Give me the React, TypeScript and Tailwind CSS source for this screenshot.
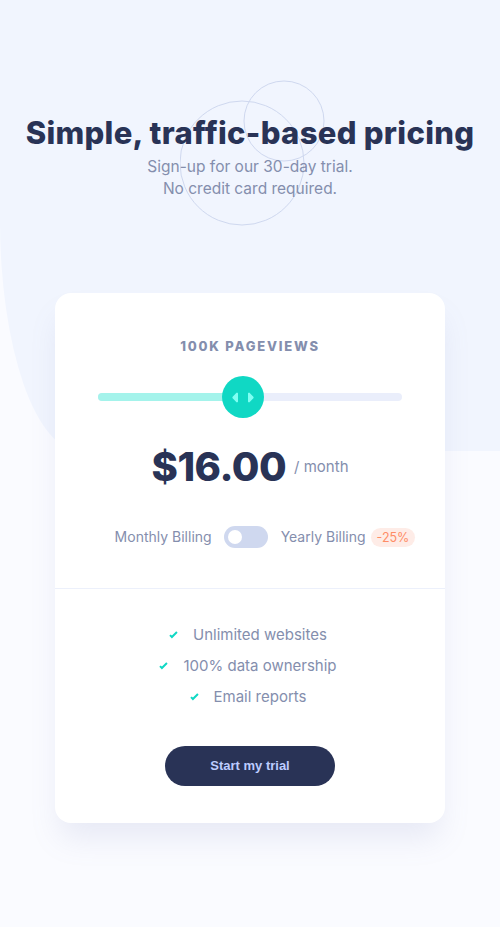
import React from 'react'

function Check() {
  return (
    <svg width="9" height="8" viewBox="0 0 9 8" className="shrink-0">
      <path fill="none" stroke="#10D8C4" strokeWidth="2" d="M1 4.134l1.907 1.908L7.949 1" />
    </svg>
  )
}

function ThumbIcon() {
  return (
    <svg width="22" height="13" viewBox="0 0 22 13">
      <g fill="#80FFF3" fillRule="evenodd">
        <path d="M16 2.558v7.884a1 1 0 001.735.679l3.639-3.943a1 1 0 000-1.356l-3.64-3.943A1 1 0 0016 2.558zM6 2.558v7.884a1 1 0 01-1.735.679L.626 7.178a1 1 0 010-1.356l3.64-3.943A1 1 0 016 2.558z" />
      </g>
    </svg>
  )
}

export default function App() {
  const [billingYearly, setBillingYearly] = React.useState(false)
  const features = ['Unlimited websites', '100% data ownership', 'Email reports']

  return (
    <main className="relative min-h-[927px] bg-[#fafbff] font-['Inter','Noto_Sans',sans-serif] overflow-hidden">
      <div className="absolute left-0 top-0 w-full h-[451px] bg-[#f1f5fe] rounded-bl-[80px_230px]" />

      <div className="relative flex flex-col items-center">
        <div className="relative mt-[113px] flex flex-col items-center">
          <svg
            className="absolute left-1/2 -translate-x-[70px] -top-[33px]"
            width="146"
            height="146"
            viewBox="0 0 146 146"
          >
            <g fill="none" stroke="#CFD8EF">
              <circle cx="104" cy="41" r="40" />
              <circle cx="62" cy="83" r="62" />
            </g>
          </svg>
          <h1 className="relative text-[31px] leading-[40px] font-extrabold tracking-[0.3px] text-[#293356] whitespace-nowrap">
            Simple, traffic-based pricing
          </h1>
          <p className="relative mt-[3px] text-[15.5px] leading-[22px] text-[#848ead] text-center">
            Sign-up for our 30-day trial.
            <br />
            No credit card required.
          </p>
        </div>

        <div className="mt-[93px] w-[390px] bg-white rounded-2xl shadow-[0_20px_30px_-5px_rgba(127,137,185,0.15)]">
          <div className="px-[43px] pt-[45px] pb-[40px] flex flex-col items-center">
            <div className="text-[13px] leading-4 font-extrabold tracking-[1.8px] text-[#848ead]">
              100K PAGEVIEWS
            </div>
            <div className="relative mt-[22px] w-full h-[42px] flex items-center">
              <div className="w-full h-2 rounded-full bg-[#eaeefb] overflow-hidden">
                <div className="h-full w-1/2 bg-[#a4f3eb]" />
              </div>
              <button className="absolute left-[124px] top-0 w-[42px] h-[42px] rounded-full bg-[#10d8c4] flex items-center justify-center">
                <ThumbIcon />
              </button>
            </div>
            <div className="mt-[25px] flex items-center gap-2">
              <span className="text-[40px] leading-[48px] font-extrabold tracking-[-0.5px] text-[#293356]">
                $16.00
              </span>
              <span className="text-[15px] text-[#848ead]">/ month</span>
            </div>
            <div className="mt-[35px] ml-[30px] w-max whitespace-nowrap flex items-center text-[14px] leading-[22px] text-[#848ead]">
              <span>Monthly Billing</span>
              <button
                onClick={() => setBillingYearly(!billingYearly)}
                className="ml-3 shrink-0 w-[44px] h-[22px] rounded-full bg-[#cfd8ef] flex items-center px-[4px]"
              >
                <span className={billingYearly ? 'ml-auto w-[14px] h-[14px] rounded-full bg-white' : 'w-[14px] h-[14px] rounded-full bg-white'} />
              </button>
              <span className="ml-[13px]">Yearly Billing</span>
              <span className="ml-[5px] px-[6px] h-[19px] leading-[19px] rounded-full bg-[#feece7] text-[#ff8c66] text-[12.5px]">
                -25%
              </span>
            </div>
          </div>
          <div className="h-px bg-[#ecf0fb]" />
          <div className="pt-[36px] pb-[37px] flex flex-col items-center">
            <ul className="flex flex-col items-center gap-[11px]">
              {features.map((f) => (
                <li key={f} className="flex items-center gap-[15px] text-[15px] leading-[20px] text-[#848ead]">
                  <Check />
                  <span className="pr-1">{f}</span>
                </li>
              ))}
            </ul>
            <button className="mt-[39px] w-[170px] h-[40px] rounded-full bg-[#293356] text-[#bdccff] text-[13px] font-bold font-['Liberation_Sans',sans-serif]">
              Start my trial
            </button>
          </div>
        </div>
      </div>
    </main>
  )
}
